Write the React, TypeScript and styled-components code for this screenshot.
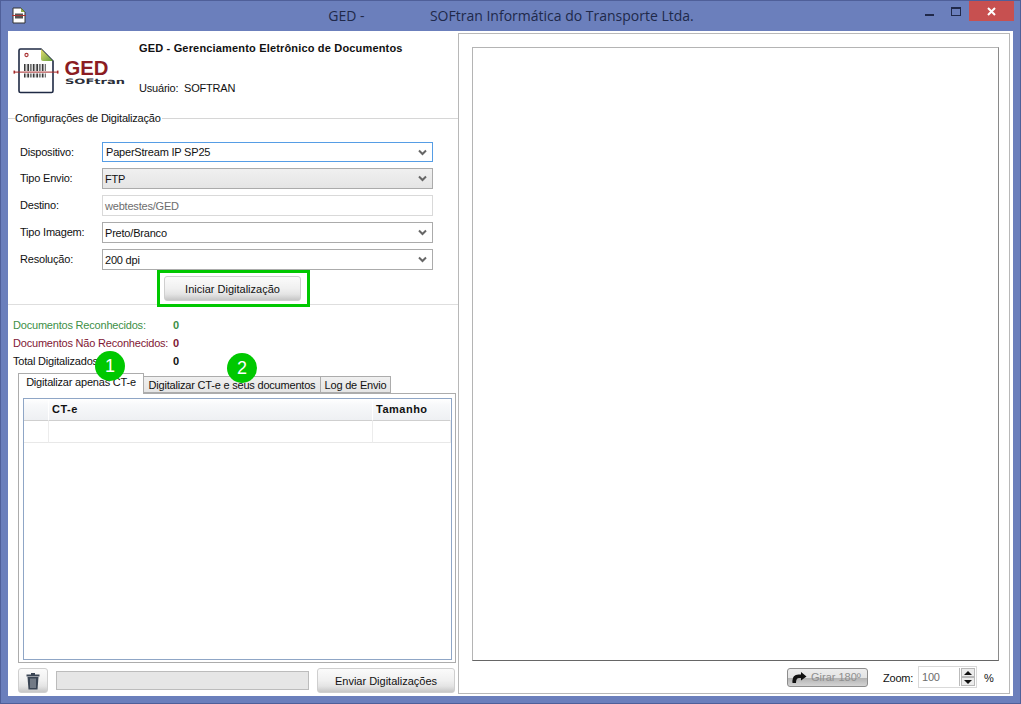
import { createGlobalStyle, styled } from "styled-components";

const GlobalStyle = createGlobalStyle`
  html, body {
    margin: 0;
    padding: 0;
    background: #6b7fbc;
  }
  * {
    box-sizing: border-box;
  }
`;

const font = `"Liberation Sans", Tahoma, sans-serif`;

// Window chrome
const Frame = styled.div`
  width: 1021px;
  height: 704px;
  display: flex;
  flex-direction: column;
  background: #6b7fbc;
  border: 1px solid #4f5f99;
  padding: 0 7px 7px;
  font-family: ${font};
  font-size: 11px;
  letter-spacing: -0.2px;
  color: #111;
  overflow: hidden;
`;

const TitleBar = styled.div`
  height: 30px;
  flex: none;
  display: flex;
  align-items: flex-start;
`;

const TitleIcon = styled.svg`
  width: 14px;
  height: 17px;
  margin: 6px 0 0 4px;
  flex: none;
`;

const TitleText = styled.div`
  flex: 1;
  text-align: center;
  font-family: "Open Sans", sans-serif;
  font-size: 14px;
  letter-spacing: 0;
  line-height: 30px;
  color: #20294a;
  white-space: pre;
  padding-left: 120px;
  padding-right: 44px;
`;

const WindowControls = styled.div`
  display: flex;
  align-items: flex-start;
  flex: none;
  margin-right: -1px;
`;

const ControlButton = styled.div<{ $w: number; $gap?: number; $close?: boolean }>`
  width: ${(p) => p.$w}px;
  height: 20px;
  padding-right: ${(p) => p.$gap ?? 0}px;
  display: flex;
  align-items: center;
  justify-content: center;
  background: ${(p) => (p.$close ? "#c75050" : "transparent")};
`;

const Client = styled.div`
  flex: 1;
  display: flex;
  background: #fff;
  min-height: 0;
`;

// Left column
const LeftColumn = styled.div`
  width: 450px;
  flex: none;
  display: flex;
  flex-direction: column;
`;

const Header = styled.div`
  height: 87px;
  flex: none;
  display: flex;
  padding: 13px 0 0 4px;
`;

const LogoSvg = styled.svg`
  width: 118px;
  height: 54px;
  flex: none;
`;

const HeaderText = styled.div`
  display: flex;
  flex-direction: column;
  justify-content: space-between;
  margin-left: 9px;
  height: 54px;
  margin-top: -3px;
`;

const AppName = styled.div`
  font-weight: bold;
  letter-spacing: 0.17px;
  line-height: 14px;
`;

const UserLine = styled.div`
  line-height: 14px;
  white-space: pre;
`;

const Group = styled.div`
  position: relative;
  height: 187px;
  flex: none;
  border-top: 1px solid #d6d6d6;
  border-bottom: 1px solid #dedede;
  padding: 23px 25px 0 12px;
`;

const Legend = styled.span`
  position: absolute;
  left: 7px;
  top: -7px;
  line-height: 13px;
  background: #fff;
  padding-right: 1px;
`;

const FormGrid = styled.div`
  display: grid;
  grid-template-columns: 82px 1fr;
  grid-template-rows: 20px 21px 21px 21px 21px;
  row-gap: 6px;
  align-items: stretch;
`;

const FieldLabel = styled.label`
  display: flex;
  align-items: center;
  padding-bottom: 1px;
`;

const Combo = styled.div<{ $variant?: "focus" | "grey" }>`
  display: flex;
  align-items: center;
  justify-content: space-between;
  padding: 0 5px 0 ${(p) => (p.$variant === "focus" ? 3 : 2)}px;
  border: 1px solid ${(p) => (p.$variant === "focus" ? "#569de5" : "#ababab")};
  background: ${(p) =>
    p.$variant === "grey" ? "linear-gradient(#f0f0f0, #e5e5e5)" : "#fff"};
`;

const ReadOnlyField = styled.div`
  display: flex;
  align-items: center;
  padding-left: 2px;
  border: 1px solid #d9d9d9;
  color: #6d6d6d;
`;

const ButtonRow = styled.div`
  display: flex;
  margin-top: 6px;
  padding-left: 144px;
`;

const Highlight = styled.div`
  position: absolute;
  inset: -7px -10px -7px -8px;
  border: 3px solid #00c800;
  pointer-events: none;
`;

const Button = styled.button<{ $w: number }>`
  width: ${(p) => p.$w}px;
  height: 25px;
  flex: none;
  padding: 0;
  display: flex;
  align-items: center;
  justify-content: center;
  font-family: ${font};
  font-size: 11px;
  letter-spacing: 0;
  color: #111;
  border: 1px solid #cfcfcf;
  border-radius: 3px;
  background: linear-gradient(#fbfbfb, #f0f0f0 50%, #e4e4e4 75%, #c6c6c6);
`;

const HighlightedButton = styled(Button)`
  position: relative;
  overflow: visible;
`;

// Counters
const Stats = styled.div`
  flex: none;
  padding: 11px 0 0 5px;
  display: grid;
  grid-template-columns: 160px 1fr;
  grid-auto-rows: 18px;
  align-items: center;
  white-space: nowrap;
`;

const StatLabel = styled.span<{ $color: string }>`
  color: ${(p) => p.$color};
`;

const StatValue = styled.span<{ $color: string }>`
  color: ${(p) => p.$color};
  font-weight: bold;
`;

// Tabs
const TabsArea = styled.div`
  flex: 1;
  min-height: 0;
  display: flex;
  flex-direction: column;
  margin: 3px 2px 0 10px;
  position: relative;
`;

const TabStrip = styled.div`
  display: flex;
  align-items: flex-end;
  height: 20px;
  flex: none;
`;

const Tab = styled.div<{ $active?: boolean; $w: number }>`
  width: ${(p) => p.$w}px;
  height: ${(p) => (p.$active ? 21 : 17)}px;
  padding-bottom: ${(p) => (p.$active ? 4 : 0)}px;
  display: flex;
  align-items: center;
  justify-content: center;
  white-space: nowrap;
  border: 1px solid #acacac;
  border-bottom: ${(p) => (p.$active ? "none" : "1px solid #acacac")};
  margin-left: ${(p) => (p.$active ? 0 : -1)}px;
  background: ${(p) =>
    p.$active ? "#fff" : "linear-gradient(#f0f0f0, #e5e5e5)"};
  position: relative;
  z-index: ${(p) => (p.$active ? 1 : 0)};
  margin-bottom: ${(p) => (p.$active ? -1 : 0)}px;
`;

const TabPane = styled.div`
  flex: 1;
  min-height: 0;
  border: 1px solid #acacac;
  padding: 4px 3px 2px 4px;
  display: flex;
`;

const DataGrid = styled.div`
  flex: 1;
  border: 1px solid #8fa6c6;
  display: grid;
  grid-template-columns: 25px 1fr 78px;
  grid-template-rows: 22px 22px 1fr;
`;

const HeadCell = styled.div`
  font-weight: bold;
  letter-spacing: 0.5px;
  display: flex;
  align-items: center;
  padding: 0 0 1px 3px;
  border-bottom: 1px solid #cfcfcf;
  border-right: 1px solid #fff;
  background: linear-gradient(#ffffff, #f7f8fa 30%, #eef0f3);
`;

const BodyCell = styled.div`
  border-bottom: 1px solid #e8e8e8;
  border-right: 1px solid #ececec;
`;

const Badge = styled.div<{ $x: number; $y: number }>`
  position: absolute;
  left: ${(p) => p.$x}px;
  top: ${(p) => p.$y}px;
  width: 30px;
  height: 30px;
  border-radius: 50%;
  background: #00c800;
  color: #fff;
  font-size: 18px;
  letter-spacing: 0;
  display: flex;
  align-items: center;
  justify-content: center;
  z-index: 2;
`;

// Bottom bar
const BottomBar = styled.div`
  flex: none;
  height: 33px;
  padding: 5px 3px 3px 10px;
  display: flex;
  align-items: center;
`;

const ProgressBar = styled.div`
  width: 253px;
  height: 19px;
  margin: 0 8px;
  flex: none;
  background: #e6e6e6;
  border: 1px solid #bcbcbc;
`;

// Right panel
const RightPanel = styled.div`
  flex: 1;
  display: flex;
  flex-direction: column;
  margin: 2px 3px 2px 0;
  border: 1px solid #b8b8b8;
  padding: 13px 10px 0 13px;
`;

const Viewer = styled.div`
  flex: 1;
  border: 1px solid #b4b4b4;
  border-right-color: #8a8a8a;
  border-bottom-color: #666;
`;

const ViewerToolbar = styled.div`
  height: 32px;
  flex: none;
  display: flex;
  align-items: center;
  padding-left: 315px;
`;

const RotateButton = styled.button`
  width: 81px;
  height: 19px;
  flex: none;
  display: flex;
  align-items: center;
  gap: 4px;
  padding: 0 0 0 4px;
  font-family: ${font};
  font-size: 11px;
  letter-spacing: 0;
  color: #8f8f8f;
  white-space: nowrap;
  border: 1px solid #8d8d8d;
  border-radius: 3px;
  background: linear-gradient(#ededed, #e4e4e4 50%, #b4b4b4 55%, #d4d4d4);
`;

const ZoomLabel = styled.span`
  margin-left: 15px;
  width: 35px;
  padding-top: 2px;
`;

const SpinBox = styled.div`
  width: 59px;
  height: 22px;
  flex: none;
  border: 1px solid #d9d9d9;
  padding-left: 3px;
  color: #6d6d6d;
  display: flex;
  align-items: center;
  justify-content: space-between;
`;

const SpinButtons = styled.div`
  width: 16px;
  height: 18px;
  margin-right: 1px;
  display: flex;
  flex-direction: column;
  border-left: 1px solid #bbb;
  padding-left: 1px;
`;

const SpinArrow = styled.div<{ $down?: boolean }>`
  flex: 1;
  border: 1px solid #b8b8b8;
  background: #ececec;
  display: flex;
  align-items: center;
  justify-content: center;
  &::after {
    content: "";
    border-left: 4px solid transparent;
    border-right: 4px solid transparent;
    border-${(p) => (p.$down ? "top" : "bottom")}: 4px solid #111;
  }
`;

const Percent = styled.span`
  margin-left: 7px;
  padding-top: 2px;
`;

function Chevron() {
  return (
    <svg width="9" height="7" viewBox="0 0 9 7">
      <path d="M1 1.5 L4.5 5 L8 1.5" fill="none" stroke="#666" strokeWidth="2" />
    </svg>
  );
}

const barcodeBars = [24, 25.5, 27, 28, 30, 31.5, 33, 34.5, 36, 37, 39, 40.5, 42, 43.5, 45];

function Logo() {
  return (
    <LogoSvg viewBox="12 44 118 54">
      <defs>
        <linearGradient id="fold" x1="0" y1="0" x2="1" y2="1">
          <stop offset="0" stopColor="#e8e070" />
          <stop offset="1" stopColor="#5f9a3c" />
        </linearGradient>
      </defs>
      <path
        d="M20.5 49 H41 L53 61 V91 Q53 92.5 51.5 92.5 H20.5 Q19 92.5 19 91 V50.5 Q19 49 20.5 49 Z"
        fill="#fff"
        stroke="#1f2a44"
        strokeWidth="1.6"
      />
      <path d="M41 49 L53 61 H43 Q41 61 41 59 Z" fill="url(#fold)" />
      <circle cx="26.5" cy="55" r="1.6" fill="none" stroke="#a33" strokeWidth="1.1" />
      <g fill="#3a3a3a">
        {barcodeBars.map((x, i) => (
          <rect key={x} x={x} y="64" width={i % 3 === 0 ? 1.1 : 0.7} height="7" />
        ))}
        {barcodeBars.map((x, i) => (
          <rect key={x} x={x} y="73.5" width={i % 3 === 0 ? 1.1 : 0.7} height="4" />
        ))}
      </g>
      <rect x="14" y="71.6" width="44" height="1" fill="#a52a2a" />
      <rect x="13.5" y="70.6" width="1.6" height="3" fill="#a52a2a" />
      <rect x="56.9" y="70.6" width="1.6" height="3" fill="#a52a2a" />
      <text
        x="64.5"
        y="74.5"
        fontFamily="'Liberation Sans', sans-serif"
        fontWeight="bold"
        fontSize="21"
        letterSpacing="0"
        fill="#8b1c22"
        textLength="44"
        lengthAdjust="spacingAndGlyphs"
      >
        GED
      </text>
      <text
        x="65"
        y="83.5"
        fontFamily="'DejaVu Sans', sans-serif"
        fontWeight="bold"
        fontSize="7.5"
        letterSpacing="0"
        fill="#2b2f3a"
        textLength="60"
        lengthAdjust="spacingAndGlyphs"
      >
        SOFtran
      </text>
    </LogoSvg>
  );
}

export default function App() {
  return (
    <Frame>
      <GlobalStyle />
      <TitleBar>
        <TitleIcon viewBox="0 0 14 17">
          <path d="M1 1 H9 L13 5 V16 H1 Z" fill="#fff" stroke="#333" strokeWidth="1" />
          <path d="M9 1 L13 5 H9 Z" fill="#8aa848" />
          <rect x="3" y="6.5" width="8" height="5" fill="#555" />
          <rect x="0" y="8" width="14" height="1" fill="#a33" />
        </TitleIcon>
        <TitleText>{"GED -                  SOFtran Informática do Transporte Ltda."}</TitleText>
        <WindowControls>
          <ControlButton $w={27} $gap={9}>
            <svg width="9" height="3" viewBox="0 0 9 3" style={{ marginTop: 8 }}>
              <rect width="9" height="2" fill="#20294a" />
            </svg>
          </ControlButton>
          <ControlButton $w={22} $gap={4}>
            <svg width="10" height="9" viewBox="0 0 10 9">
              <rect x="0.5" y="0.5" width="9" height="8" fill="none" stroke="#20294a" />
              <rect width="10" height="2" fill="#20294a" />
            </svg>
          </ControlButton>
          <ControlButton $w={45} $close>
            <svg width="9" height="9" viewBox="0 0 9 9">
              <path d="M1 1 L8 8 M8 1 L1 8" stroke="#fff" strokeWidth="2" />
            </svg>
          </ControlButton>
        </WindowControls>
      </TitleBar>

      <Client>
        <LeftColumn>
          <Header>
            <Logo />
            <HeaderText>
              <AppName>GED - Gerenciamento Eletrônico de Documentos</AppName>
              <UserLine>{"Usuário:  SOFTRAN"}</UserLine>
            </HeaderText>
          </Header>

          <Group>
            <Legend>Configurações de Digitalização</Legend>
            <FormGrid>
              <FieldLabel>Dispositivo:</FieldLabel>
              <Combo $variant="focus">
                PaperStream IP SP25
                <Chevron />
              </Combo>
              <FieldLabel>Tipo Envio:</FieldLabel>
              <Combo $variant="grey">
                FTP
                <Chevron />
              </Combo>
              <FieldLabel>Destino:</FieldLabel>
              <ReadOnlyField>webtestes/GED</ReadOnlyField>
              <FieldLabel>Tipo Imagem:</FieldLabel>
              <Combo>
                Preto/Branco
                <Chevron />
              </Combo>
              <FieldLabel>Resolução:</FieldLabel>
              <Combo>
                200 dpi
                <Chevron />
              </Combo>
            </FormGrid>
            <ButtonRow>
              <HighlightedButton $w={137}>
                Iniciar Digitalização
                <Highlight />
              </HighlightedButton>
            </ButtonRow>
          </Group>

          <Stats>
            <StatLabel $color="#3c8f46">Documentos Reconhecidos:</StatLabel>
            <StatValue $color="#3c8f46">0</StatValue>
            <StatLabel $color="#7f1734">Documentos Não Reconhecidos:</StatLabel>
            <StatValue $color="#7f1734">0</StatValue>
            <StatLabel $color="#111">Total Digitalizados</StatLabel>
            <StatValue $color="#111">0</StatValue>
          </Stats>

          <TabsArea>
            <Badge $x={77} $y={-22}>1</Badge>
            <Badge $x={209} $y={-20}>2</Badge>
            <TabStrip>
              <Tab $active $w={126}>Digitalizar apenas CT-e</Tab>
              <Tab $w={178}>Digitalizar CT-e e seus documentos</Tab>
              <Tab $w={71}>Log de Envio</Tab>
            </TabStrip>
            <TabPane>
              <DataGrid>
                <HeadCell />
                <HeadCell>CT-e</HeadCell>
                <HeadCell>Tamanho</HeadCell>
                <BodyCell />
                <BodyCell />
                <BodyCell />
              </DataGrid>
            </TabPane>
          </TabsArea>

          <BottomBar>
            <Button $w={30}>
              <svg width="14" height="18" viewBox="0 0 14 18">
                <path d="M0.5 2.5 H13.5 V4.5 H0.5 Z M5 1 H9 V2.5 H5 Z" fill="#3a4554" />
                <path d="M1.5 5 H12.5 L11.5 17.5 H2.5 Z" fill="#3a4554" />
                <path d="M5 6.5 V16 M7 6.5 V16 M9 6.5 V16" stroke="#c8ccd2" strokeWidth="0.8" />
              </svg>
            </Button>
            <ProgressBar />
            <Button $w={138}>Enviar Digitalizações</Button>
          </BottomBar>
        </LeftColumn>

        <RightPanel>
          <Viewer />
          <ViewerToolbar>
            <RotateButton>
              <svg width="15" height="11" viewBox="0 0 15 11">
                <path d="M0.5 11 Q-0.5 3 6.5 2.5 H9 V0 L14.5 4.5 L9 8.5 V6 H7 Q4 6 4 11 Z" fill="#111" />
              </svg>
              Girar 180º
            </RotateButton>
            <ZoomLabel>Zoom:</ZoomLabel>
            <SpinBox>
              100
              <SpinButtons>
                <SpinArrow />
                <SpinArrow $down />
              </SpinButtons>
            </SpinBox>
            <Percent>%</Percent>
          </ViewerToolbar>
        </RightPanel>
      </Client>
    </Frame>
  );
}
